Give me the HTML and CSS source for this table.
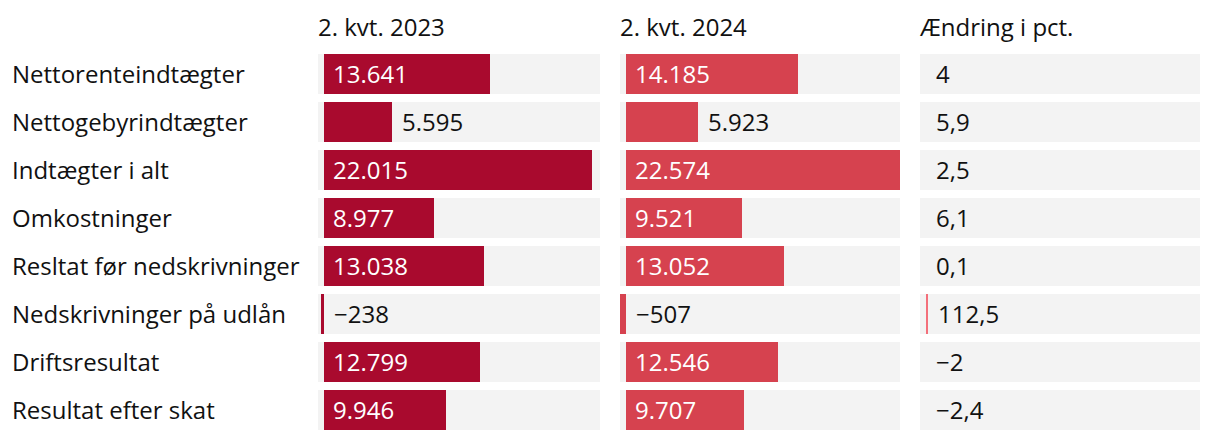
FILE: index.html
```html
<!DOCTYPE html>
<html lang="da">
<head>
<meta charset="utf-8">
<title>Nøgletal</title>
<link rel="stylesheet" href="styles.css">
</head>
<body>
<div class="chart">
  <div class="head"></div>
  <div class="head">2. kvt. 2023</div>
  <div class="head">2. kvt. 2024</div>
  <div class="head">Ændring i pct.</div>

  <div class="label">Nettorenteindtægter</div>
  <div class="cell"><div class="bar a in" style="width:166px">13.641</div></div>
  <div class="cell"><div class="bar b in" style="width:172px">14.185</div></div>
  <div class="cell"><span class="val">4</span></div>

  <div class="label">Nettogebyrindtægter</div>
  <div class="cell"><div class="bar a" style="width:68px"></div><span class="val">5.595</span></div>
  <div class="cell"><div class="bar b" style="width:72px"></div><span class="val">5.923</span></div>
  <div class="cell"><span class="val">5,9</span></div>

  <div class="label">Indtægter i alt</div>
  <div class="cell"><div class="bar a in" style="width:268px">22.015</div></div>
  <div class="cell"><div class="bar b in" style="width:274px">22.574</div></div>
  <div class="cell"><span class="val">2,5</span></div>

  <div class="label">Omkostninger</div>
  <div class="cell"><div class="bar a in" style="width:110px">8.977</div></div>
  <div class="cell"><div class="bar b in" style="width:116px">9.521</div></div>
  <div class="cell"><span class="val">6,1</span></div>

  <div class="label">Resltat før nedskrivninger</div>
  <div class="cell"><div class="bar a in" style="width:160px">13.038</div></div>
  <div class="cell"><div class="bar b in" style="width:158px">13.052</div></div>
  <div class="cell"><span class="val">0,1</span></div>

  <div class="label">Nedskrivninger på udlån</div>
  <div class="cell"><div class="bar a" style="width:3px;margin-left:-3px"></div><span class="val">−238</span></div>
  <div class="cell"><div class="bar b" style="width:6px;margin-left:-6px"></div><span class="val">−507</span></div>
  <div class="cell"><div class="bar c" style="width:2px"></div><span class="val">112,5</span></div>

  <div class="label">Driftsresultat</div>
  <div class="cell"><div class="bar a in" style="width:156px">12.799</div></div>
  <div class="cell"><div class="bar b in" style="width:152px">12.546</div></div>
  <div class="cell"><span class="val">−2</span></div>

  <div class="label">Resultat efter skat</div>
  <div class="cell"><div class="bar a in" style="width:122px">9.946</div></div>
  <div class="cell"><div class="bar b in" style="width:118px">9.707</div></div>
  <div class="cell"><span class="val">−2,4</span></div>
</div>
</body>
</html>
```
FILE: styles.css
```css
html, body {
  margin: 0;
  padding: 0;
  background: #ffffff;
}

body {
  font-family: "Open Sans", "Noto Sans", sans-serif;
  font-size: 24px;
  color: #111111;
}

.chart {
  display: grid;
  grid-template-columns: 286px 282px 280px 280px;
  grid-template-rows: 46px repeat(8, 40px);
  column-gap: 20px;
  row-gap: 8px;
  padding-left: 12px;
  width: 1188px;
}

.head {
  padding-top: 12px;
  line-height: 30px;
  white-space: nowrap;
}

.label {
  line-height: 40px;
  white-space: nowrap;
}

.cell {
  display: flex;
  align-items: stretch;
  background: #f3f3f3;
  padding-left: 6px;
  height: 40px;
  line-height: 40px;
  white-space: nowrap;
}

.bar {
  flex: none;
  height: 40px;
}

.bar.in {
  color: #ffffff;
  padding-left: 9px;
  box-sizing: border-box;
}

.bar.a {
  background: #a90a2e;
}

.bar.b {
  background: #d6424f;
}

.bar.c {
  background: #f36f7a;
}

.val {
  margin-left: 10px;
}
```
